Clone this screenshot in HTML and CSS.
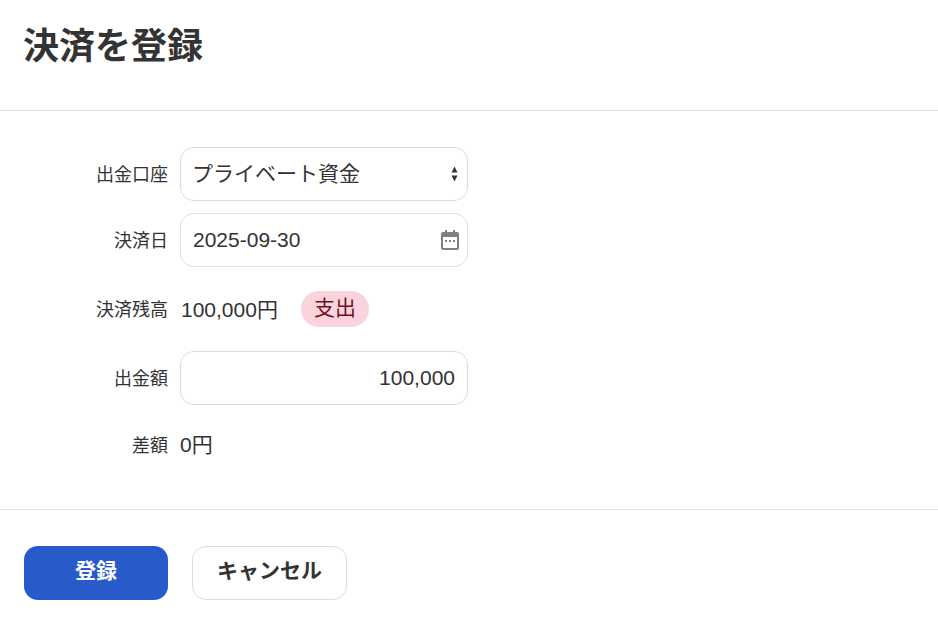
FILE: index.html
```html
<!DOCTYPE html>
<html lang="ja">
<head>
    <meta charset="UTF-8">
    <title>決済を登録</title>
    <link rel="stylesheet" href="styles.css">
</head>
<body>
    <header class="modalHeader">
        <h1>決済を登録</h1>
    </header>

    <main class="modalBody">
        <div class="formRow rowSelect">
            <label class="formLabel">出金口座</label>
            <div class="field selectField">
                <span>プライベート資金</span>
                <svg class="sortIcon" width="7" height="16" viewBox="0 0 7 16"><path d="M3.5 .5L6.5 6.5H.5z"/><path d="M3.5 15.5L.5 9.5h6z"/></svg>
            </div>
        </div>
        <div class="formRow rowDate">
            <label class="formLabel">決済日</label>
            <div class="field dateField">
                <span>2025-09-30</span>
                <svg class="calendarIcon" width="18" height="20" viewBox="0 0 18 20"><path fill-rule="evenodd" d="M4 0h2v2h6V0h2v2h2a2 2 0 0 1 2 2v14a2 2 0 0 1-2 2H2a2 2 0 0 1-2-2V4a2 2 0 0 1 2-2h2zM2 7v11h14V7z"/><path d="M4 10h2v2H4zM8 10h2v2H8zM12 10h2v2h-2z"/></svg>
            </div>
        </div>
        <div class="formRow rowBalance">
            <label class="formLabel">決済残高</label>
            <span class="plainValue">100,000円</span>
            <span class="badge">支出</span>
        </div>
        <div class="formRow rowAmount">
            <label class="formLabel">出金額</label>
            <div class="field amountField">100,000</div>
        </div>
        <div class="formRow rowDiff">
            <label class="formLabel">差額</label>
            <span class="plainValue">0円</span>
        </div>
    </main>

    <footer class="modalFooter">
        <button class="primaryButton" type="button">登録</button>
        <button class="cancelButton" type="button">キャンセル</button>
    </footer>
</body>
</html>
```

FILE: styles.css
```css
* {
    box-sizing: border-box;
}

body {
    margin: 0;
    background-color: #fff;
    color: #333;
    font-family: "Liberation Sans", "Noto Sans CJK JP", sans-serif;
    font-size: 21px;
}

.modalHeader {
    height: 111px;
    padding: 25px 24px 0 23px;
    border-bottom: 1px solid #e3e3e3;
}

.modalHeader h1 {
    margin: 0;
    font-size: 36px;
    line-height: 44px;
    font-weight: 700;
}

.modalBody {
    height: 399px;
    padding-top: 36px;
    border-bottom: 1px solid #e3e3e3;
}

.formRow {
    display: flex;
    align-items: center;
}

.rowSelect {
    height: 54px;
    margin-bottom: 12px;
}

.rowDate {
    height: 54px;
    margin-bottom: 24px;
}

.rowBalance {
    height: 36px;
    margin-bottom: 24px;
}

.rowAmount {
    height: 54px;
    margin-bottom: 24px;
}

.rowDiff {
    height: 32px;
}

.formLabel {
    width: 168px;
    margin-right: 12px;
    padding-bottom: 2px;
    text-align: right;
    font-size: 18px;
}

.plainValue {
    padding-bottom: 2px;
    padding-left: 1px;
}

.rowDiff .plainValue {
    padding-bottom: 4px;
    padding-left: 0;
}

.field {
    display: flex;
    align-items: center;
    justify-content: space-between;
    width: 288px;
    height: 54px;
    padding: 0 12px;
    border: 1px solid #ddd;
    border-radius: 14px;
}

.selectField {
    padding-right: 9px;
}

.selectField span {
    padding-bottom: 5px;
    margin-left: -1px;
}

.dateField {
    padding-right: 8px;
    border-color: #e4e0da;
}

.dateField span {
    padding-bottom: 1px;
}

.amountField {
    justify-content: flex-end;
    padding-bottom: 1px;
}

.sortIcon {
    fill: #333;
}

.calendarIcon {
    fill: #808080;
}

.badge {
    margin-left: 23px;
    padding: 0 13px;
    height: 36px;
    line-height: 34px;
    border-radius: 18px;
    background-color: #fbd3dc;
    color: #6b0f1f;
}

.modalFooter {
    display: flex;
    gap: 24px;
    padding: 36px 24px 0;
}

.primaryButton,
.cancelButton {
    height: 54px;
    padding: 0 0 8px;
    border-radius: 14px;
    font-family: inherit;
    font-size: 21px;
    font-weight: 700;
}

.primaryButton {
    width: 144px;
    border: none;
    background-color: #285bc9;
    color: #fff;
}

.cancelButton {
    width: 155px;
    border: 1px solid #ddd;
    background-color: #fff;
    color: #333;
}
```
